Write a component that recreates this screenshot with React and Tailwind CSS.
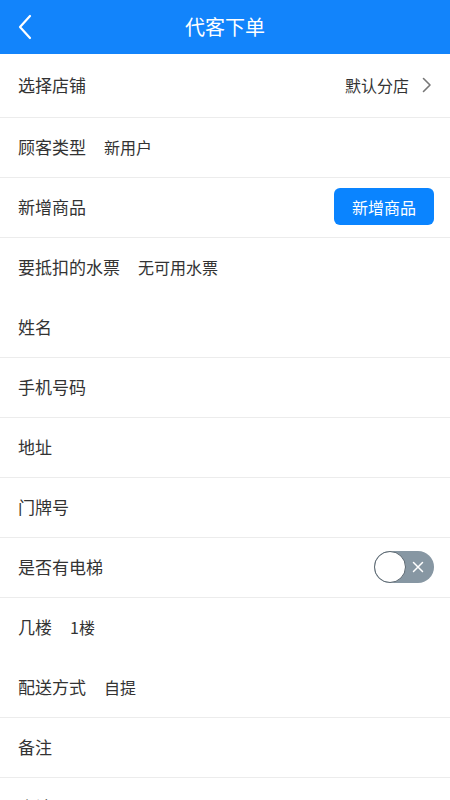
import React from 'react';

const font = { fontFamily: '"Noto Sans CJK SC", "Noto Sans", sans-serif' };

const Row = ({ label, value, border = true, tall = false, children }) => (
    <div className={`flex items-center pl-[18px] pr-[16px] pb-[2px] bg-white ${tall ? 'h-[64px]' : 'h-[60px]'} ${border ? 'border-b border-[#ececec]' : ''}`}>
        <span className="text-[17px] text-[#333]">{label}</span>
        {value && <span className="ml-[18px] text-[16px] text-[#333]">{value}</span>}
        {children}
    </div>
);

const Toggle = () => (
    <div className="ml-auto relative w-[60px] h-[32px] rounded-full bg-[#8797a3]">
        <div className="absolute left-0 top-0 w-[32px] h-[32px] rounded-full bg-white border-[1.5px] border-[#5b6770]" />
        <svg className="absolute right-[10px] top-[10px]" width="12" height="12" viewBox="0 0 12 12">
            <path d="M1.5 1.5 L10.5 10.5 M10.5 1.5 L1.5 10.5" stroke="white" strokeWidth="1.5" strokeLinecap="round" />
        </svg>
    </div>
);

export default function App() {
    return (
        <div className="w-[450px] h-[800px] overflow-hidden bg-white" style={font}>
            <header className="relative h-[54px] bg-[#1284fb] flex items-center justify-center">
                <svg className="absolute left-[16px] top-[14px]" width="18" height="26" viewBox="0 0 18 26">
                    <path d="M14 2 L4 13 L14 24" stroke="white" strokeWidth="2.2" fill="none" strokeLinecap="round" strokeLinejoin="round" />
                </svg>
                <h1 className="text-[20px] text-white">代客下单</h1>
            </header>

            <Row label="选择店铺" tall>
                <span className="ml-auto text-[16px] text-[#333]">默认分店</span>
                <svg className="ml-[13px] mr-[2px]" width="10" height="16" viewBox="0 0 10 16">
                    <path d="M1.5 1.5 L8 8 L1.5 14.5" stroke="#777" strokeWidth="1.6" fill="none" strokeLinecap="round" strokeLinejoin="round" />
                </svg>
            </Row>
            <Row label="顾客类型" value="新用户" />
            <Row label="新增商品">
                <button className="ml-auto w-[100px] h-[37px] rounded-[6px] bg-[#0a84ff] text-white text-[16px]">新增商品</button>
            </Row>
            <Row label="要抵扣的水票" value="无可用水票" border={false} />
            <Row label="姓名" />
            <Row label="手机号码" />
            <Row label="地址" />
            <Row label="门牌号" />
            <Row label="是否有电梯">
                <Toggle />
            </Row>
            <Row label="几楼" value="1楼" border={false} />
            <Row label="配送方式" value="自提" />
            <Row label="备注" />
            <Row label="合计" />
        </div>
    );
}
